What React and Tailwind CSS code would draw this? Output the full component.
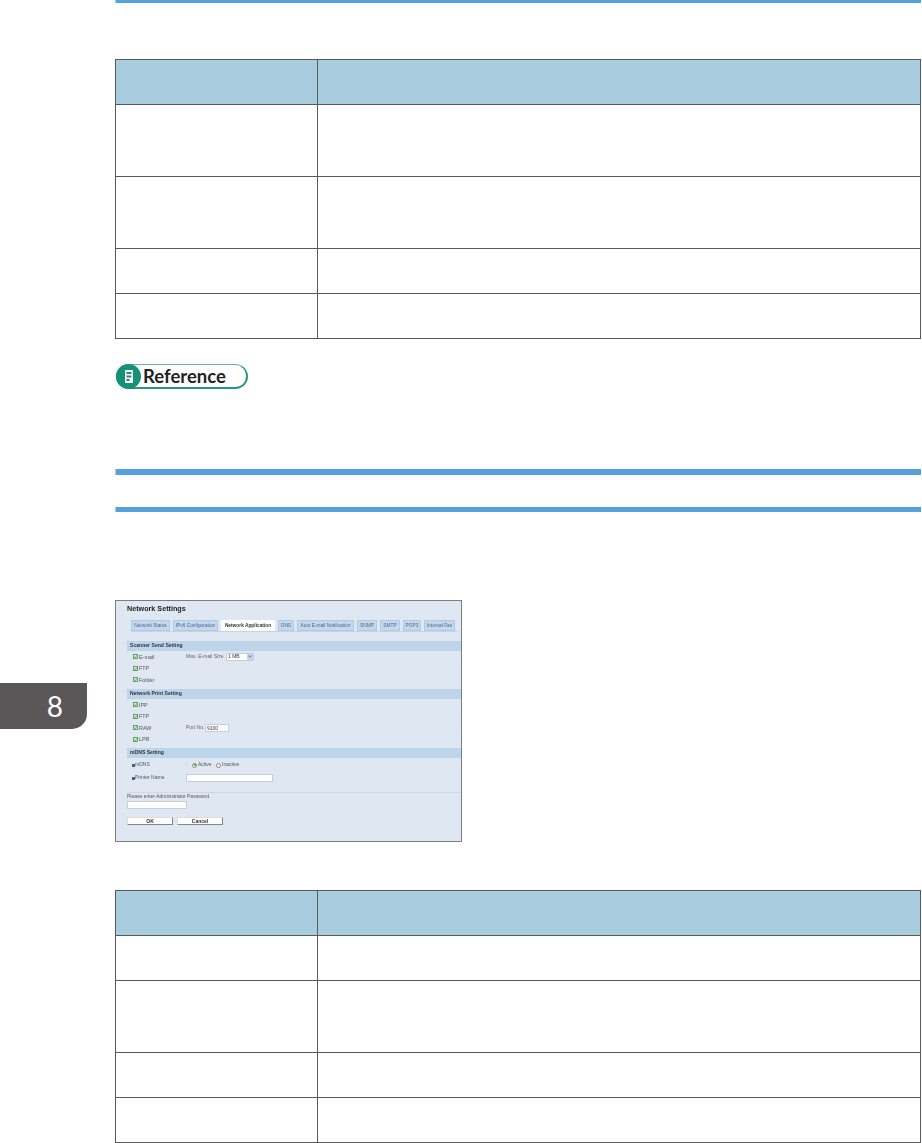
const font = "font-['Liberation_Sans',Arial,sans-serif]";

function DocTable({ rows }) {
  return (
    <div className="border-t border-l border-[#595959] w-[806px]">
      <div className="flex h-[45px] bg-[#a7cddf] border-b border-[#595959]">
        <div className="w-[202px] border-r border-[#595959]" />
        <div className="flex-1 border-r border-[#595959]" />
      </div>
      {rows.map((h, i) => (
        <div key={i} className="flex border-b border-[#595959]" style={{ height: h }}>
          <div className="w-[202px] border-r border-[#595959]" />
          <div className="flex-1 border-r border-[#595959]" />
        </div>
      ))}
    </div>
  );
}

function ReferenceBadge() {
  return (
    <div className="relative flex items-center w-[132px] h-[25px] border border-b-2 border-r-2 border-[#2b957f] border-t-[#6fb3a4] rounded-full ml-[1px]">
      <div className="absolute left-[-1px] top-[-1px] w-[25px] h-[25px] rounded-full bg-[#17907a] flex items-center justify-center">
        <svg width="8" height="13" viewBox="0 0 8 13">
          <rect x="0" y="0" width="8" height="13" rx="1" fill="#fff" />
          <rect x="1.5" y="2" width="5" height="2" fill="#17907a" />
          <rect x="1.5" y="5.5" width="5" height="2" fill="#17907a" />
          <rect x="1.5" y="9" width="3" height="2" fill="#17907a" />
        </svg>
      </div>
      <span className="ml-[26px] text-[18.5px] leading-none font-bold text-[#222] font-['Lato',sans-serif]">Reference</span>
    </div>
  );
}

function Tab({ label, w, active }) {
  return (
    <div
      className={
        "h-[11px] flex items-center justify-center text-[4.8px] whitespace-nowrap " +
        (active ? "bg-white font-bold text-[#333]" : "bg-[#c3d8ec] text-[#4a6a96] border border-[#b4c9de]")
      }
      style={{ width: w }}
    >
      {label}
    </div>
  );
}

function Band({ children }) {
  return (
    <div className="h-[10px] ml-[11px] bg-[#bcd5eb] pl-[3px] flex items-center text-[5.1px] font-bold text-[#333]">
      {children}
    </div>
  );
}

function Check({ label, children }) {
  return (
    <div className="flex items-center h-[11.5px] pl-[17px] text-[5px] text-[#555]">
      <span className="w-[5px] h-[5px] border border-[#5fa35f] bg-[#dcefd4] mr-[1px] flex items-center justify-center">
        <svg width="3" height="3" viewBox="0 0 3 3">
          <path d="M0 1.5 L1.2 2.7 L3 0.3" stroke="#3c8a3c" strokeWidth="0.7" fill="none" />
        </svg>
      </span>
      <span className="w-[47px] text-[5.4px]">{label}</span>
      {children}
    </div>
  );
}

function NetworkSettingsShot() {
  return (
    <div className="w-[347px] h-[242px] border border-[#7d7d7d] bg-[#dfe8f2] blur-[0.3px] overflow-hidden">
      <div className="pl-[11px] h-[16px] flex items-center text-[7.2px] font-bold text-[#222]">Network Settings</div>
      <div className="flex gap-[3px] ml-[15px] mt-[3px] h-[12px] border-b border-[#c8d4e0] mr-[3px]">
        <Tab label="Network Status" w={39} />
        <Tab label="IPv6 Configuration" w={45} />
        <Tab label="Network Application" w={54} active />
        <Tab label="DNS" w={16} />
        <Tab label="Auto E-mail Notification" w={57} />
        <Tab label="SNMP" w={20} />
        <Tab label="SMTP" w={20} />
        <Tab label="POP3" w={18} />
        <Tab label="Internal Fax" w={31} />
      </div>
      <div className="mt-[9px]">
        <Band>Scanner Send Setting</Band>
        <div className="pb-[3.5px]">
          <Check label="E-mail">
            <span className="w-[40px] text-[#666]">Max. E-mail Size</span>
            <span className="w-[28px] h-[8px] bg-white border border-[#c4cfda] flex items-center pl-[1px] text-[#333]">
              1 MB
              <span className="ml-auto w-[6px] h-[6px] bg-[#c3d8ec] flex items-center justify-center">
                <svg width="4" height="3" viewBox="0 0 4 3">
                  <path d="M0.4 0.4 L2 2.4 L3.6 0.4" stroke="#44679a" strokeWidth="0.8" fill="none" />
                </svg>
              </span>
            </span>
          </Check>
          <Check label="FTP" />
          <Check label="Folder" />
        </div>
        <Band>Network Print Setting</Band>
        <div className="pb-[3px]">
          <Check label="IPP" />
          <Check label="FTP" />
          <Check label="RAW">
            <span className="w-[19px] text-[#666]">Port No.</span>
            <span className="w-[24px] h-[8px] bg-white border border-[#c4cfda] pl-[1px] leading-[6px] text-[#333]">9100</span>
          </Check>
          <Check label="LPR" />
        </div>
        <Band>mDNS Setting</Band>
        <div className="pl-[16px] pt-[0.5px] text-[5px] text-[#555]">
          <div className="flex items-center h-[13px]">
            <span className="w-[3px] h-[3px] bg-[#3d5f9a]" />
            <span className="w-[51px]">mDNS</span>
            <span className="w-[6px]">:</span>
            <span className="w-[5px] h-[5px] rounded-full border border-[#6a9a6a] bg-white mr-[1px] flex items-center justify-center">
              <span className="w-[2px] h-[2px] rounded-full bg-[#4f8a4f]" />
            </span>
            <span className="w-[18px]">Active</span>
            <span className="w-[5px] h-[5px] rounded-full border border-[#888] bg-white mr-[1px]" />
            <span>Inactive</span>
          </div>
          <div className="flex items-center h-[13px]">
            <span className="w-[3px] h-[3px] bg-[#3d5f9a]" />
            <span className="w-[51px]">Printer Name</span>
            <span className="w-[87px] h-[8px] bg-white border border-[#c4cfda]" />
          </div>
        </div>
        <div className="mt-[7px] ml-[11px] border-t border-[#cfd9e4] text-[5px] text-[#555]">
          <div className="h-[8px] flex items-center">Please enter Administrator Password.</div>
          <div className="w-[60px] h-[8px] bg-white border border-[#c4cfda]" />
          <div className="flex gap-[4px] mt-[8px]">
            <div className="w-[46px] h-[8px] bg-white border border-[#888] border-t-[#ddd] border-l-[#ddd] text-center leading-[6px] font-bold text-[#333]">OK</div>
            <div className="w-[46px] h-[8px] bg-white border border-[#888] border-t-[#ddd] border-l-[#ddd] text-center leading-[6px] font-bold text-[#333]">Cancel</div>
          </div>
        </div>
      </div>
    </div>
  );
}

export default function App() {
  return (
    <div className={`flex w-[922px] h-[1143px] bg-white overflow-hidden ${font}`}>
      <div className="w-[115px] shrink-0 pt-[683px]">
        <div className="w-[87px] h-[46px] bg-[#595757] rounded-br-[15px] flex items-center justify-end pr-[24px] text-[28px] leading-none text-white font-['Lato',sans-serif]">
          8
        </div>
      </div>
      <div className="w-[806px] shrink-0">
        <div className="h-[3px] bg-[#55a1de] border-l border-[#a5cbe8]" />
        <div className="mt-[56px]">
          <DocTable rows={[72, 72, 45, 45]} />
        </div>
        <div className="mt-[25px]">
          <ReferenceBadge />
        </div>
        <div className="mt-[80px] h-[6px] bg-[#55a1de] border-l border-[#a5cbe8]" />
        <div className="mt-[32px] h-[5px] bg-[#55a1de] border-l border-[#a5cbe8]" />
        <div className="mt-[88px]">
          <NetworkSettingsShot />
        </div>
        <div className="mt-[48px]">
          <DocTable rows={[45, 72, 45, 45]} />
        </div>
      </div>
    </div>
  );
}
